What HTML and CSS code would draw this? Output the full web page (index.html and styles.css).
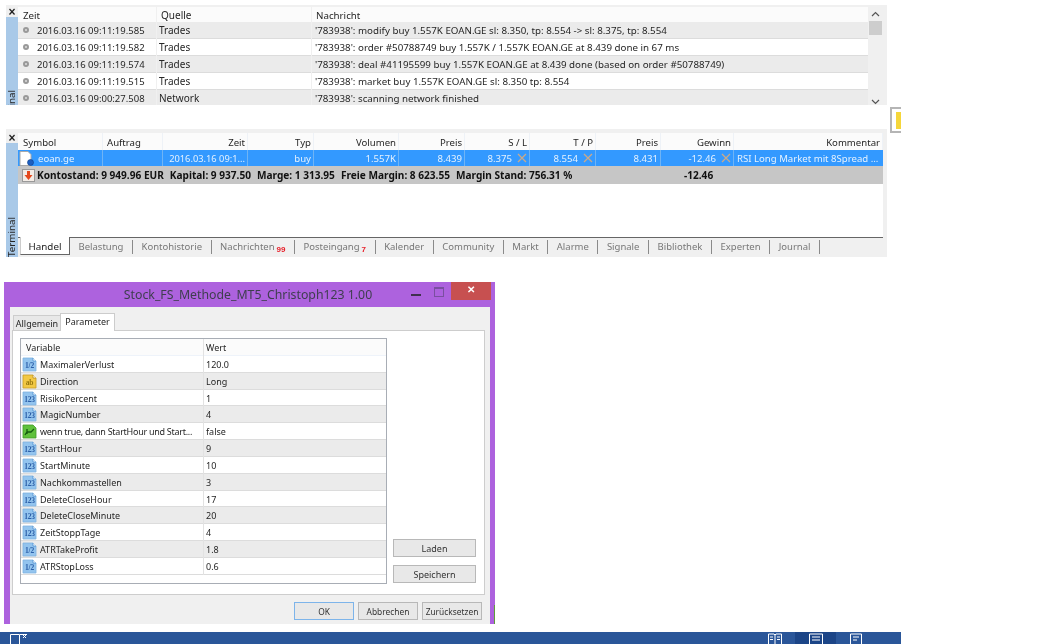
FILE: index.html
```html
<!DOCTYPE html>
<html lang="de">
<head>
<meta charset="utf-8">
<title>Terminal</title>
<link rel="stylesheet" href="styles.css">
</head>
<body>
<svg class="defs" width="0" height="0">
  <symbol id="doc" viewBox="0 0 15 15"><path d="M1 1h10l3 3v10H1z" fill="#93c4ee" stroke="#7fb2e0" stroke-width=".8"/><path d="M11 1v3h3" fill="#fff" stroke="#4d8fd0" stroke-width=".8"/></symbol>
  <symbol id="doc-y" viewBox="0 0 15 15"><path d="M1 1h10l3 3v10H1z" fill="#f2c844" stroke="#c89c24" stroke-width=".8"/><path d="M11 1v3h3" fill="#fff" stroke="#b88c20" stroke-width=".8"/></symbol>
  <symbol id="doc-g" viewBox="0 0 15 15"><path d="M1 1h10l3 3v10H1z" fill="#5fc13c" stroke="#3f9a26" stroke-width=".8"/><path d="M3 11l2-3h4l3-3M5 5v5" fill="none" stroke="#145c10" stroke-width="1.300"/></symbol>
  <symbol id="x" viewBox="0 0 10 10"><path d="M1 1l8 8M9 1l-8 8" fill="none" stroke="#c9a98a" stroke-width="1.300"/></symbol>
</svg>

<section class="panel log-panel">
  <div class="strip">
    <span class="close">×</span>
    <div class="side"><span class="side-label">Terminal</span></div>
  </div>
  <div class="list">
    <div class="row log head"><span>Zeit</span><span>Quelle</span><span>Nachricht</span></div>
    <div class="row log alt"><span class="time"><i class="dot"></i>2016.03.16 09:11:19.585</span><span>Trades</span><span>'783938': modify buy 1.557K EOAN.GE sl: 8.350, tp: 8.554 -&gt; sl: 8.375, tp: 8.554</span></div>
    <div class="row log"><span class="time"><i class="dot"></i>2016.03.16 09:11:19.582</span><span>Trades</span><span>'783938': order #50788749 buy 1.557K / 1.557K EOAN.GE at 8.439 done in 67 ms</span></div>
    <div class="row log alt"><span class="time"><i class="dot"></i>2016.03.16 09:11:19.574</span><span>Trades</span><span>'783938': deal #41195599 buy 1.557K EOAN.GE at 8.439 done (based on order #50788749)</span></div>
    <div class="row log"><span class="time"><i class="dot"></i>2016.03.16 09:11:19.515</span><span>Trades</span><span>'783938': market buy 1.557K EOAN.GE sl: 8.350 tp: 8.554</span></div>
    <div class="row log alt"><span class="time"><i class="dot"></i>2016.03.16 09:00:27.508</span><span>Network</span><span>'783938': scanning network finished</span></div>
  </div>
  <div class="scrollbar">
    <svg width="15" height="14" viewBox="0 0 15 14"><path d="M4 9l3.500-3.500L11 9" fill="none" stroke="#555" stroke-width="1.200"/></svg>
    <div class="thumb"></div>
    <svg class="down" width="15" height="10" viewBox="0 0 15 10"><path d="M4 3l3.500 3.500L11 3" fill="none" stroke="#555" stroke-width="1.200"/></svg>
  </div>
</section>

<div class="side-tip"><div class="tip-icon"></div></div>

<section class="panel trade-panel">
  <div class="strip">
    <span class="close">×</span>
    <div class="side"><span class="side-label bottom">Terminal</span></div>
  </div>
  <div class="trade-main">
    <div class="row trade head">
      <span>Symbol</span><span>Auftrag</span><span class="r">Zeit</span><span class="r">Typ</span><span class="r">Volumen</span><span class="r">Preis</span><span class="r">S / L</span><span class="r">T / P</span><span class="r">Preis</span><span class="r">Gewinn</span><span class="r">Kommentar</span>
    </div>
    <div class="row trade sel">
      <span class="sym"><svg width="16" height="16" viewBox="0 0 16 16"><path d="M1 .5h8l3 3v11H1z" fill="#fff" stroke="#aaa"/><circle cx="11.500" cy="11.500" r="3" fill="#1d5fc0" stroke="#0c3c8a" stroke-width=".6"/></svg>eoan.ge</span>
      <span></span>
      <span class="r dt">2016.03.16 09:1...</span><span class="r">buy</span><span class="r">1.557K</span><span class="r">8.439</span>
      <span class="r x">8.375<svg class="cross"><use href="#x"/></svg></span><span class="r x">8.554<svg class="cross"><use href="#x"/></svg></span>
      <span class="r">8.431</span><span class="r x">-12.46<svg class="cross"><use href="#x"/></svg></span><span class="cmt">RSI Long Market mit 8Spread ...</span>
    </div>
    <div class="summary">
      <svg width="13" height="13" viewBox="0 0 13 13"><rect x=".5" y=".5" width="12" height="12" fill="#f3ece6" stroke="#999"/><path d="M5 2h3v4h2.500L6.500 11 2.500 6H5z" fill="#e4481c"/></svg>
      <strong class="acct">Kontostand: 9 949.96 EUR</strong><strong class="acct">Kapital: 9 937.50</strong><strong class="acct">Marge: 1 313.95</strong><strong class="acct">Freie Margin: 8 623.55</strong><strong class="acct">Margin Stand: 756.31 %</strong>
      <strong class="total">-12.46</strong>
    </div>
    <div class="spacer"></div>
    <nav class="tabs">
      <span class="tab active">Handel</span>
      <span class="tab">Belastung</span>
      <span class="tab">Kontohistorie</span>
      <span class="tab">Nachrichten<em>99</em></span>
      <span class="tab">Posteingang<em>7</em></span>
      <span class="tab">Kalender</span>
      <span class="tab">Community</span>
      <span class="tab">Markt</span>
      <span class="tab">Alarme</span>
      <span class="tab">Signale</span>
      <span class="tab">Bibliothek</span>
      <span class="tab">Experten</span>
      <span class="tab">Journal</span>
    </nav>
  </div>
</section>

<section class="dialog">
  <header class="titlebar">
    <span class="title">Stock_FS_Methode_MT5_Christoph123 1.00</span>
    <div class="controls">
      <span class="min"></span><span class="max"></span>
      <span class="shut">✕</span>
    </div>
  </header>
  <div class="client">
    <div class="dtabs"><span class="dtab">Allgemein</span><span class="dtab on">Parameter</span></div>
    <div class="page">
      <div class="ptable">
        <div class="prow phead"><span>Variable</span><span>Wert</span></div>
        <div class="prow"><span class="pname"><svg class="ic"><use href="#doc"/></svg><b class="gl">1/2</b>MaximalerVerlust</span><span>120.0</span></div>
        <div class="prow alt"><span class="pname"><svg class="ic"><use href="#doc-y"/></svg><b class="gl y">ab</b>Direction</span><span>Long</span></div>
        <div class="prow"><span class="pname"><svg class="ic"><use href="#doc"/></svg><b class="gl">123</b>RisikoPercent</span><span>1</span></div>
        <div class="prow alt"><span class="pname"><svg class="ic"><use href="#doc"/></svg><b class="gl">123</b>MagicNumber</span><span>4</span></div>
        <div class="prow"><span class="pname tight"><svg class="ic"><use href="#doc-g"/></svg>wenn true, dann StartHour und Start...</span><span>false</span></div>
        <div class="prow alt"><span class="pname"><svg class="ic"><use href="#doc"/></svg><b class="gl">123</b>StartHour</span><span>9</span></div>
        <div class="prow"><span class="pname"><svg class="ic"><use href="#doc"/></svg><b class="gl">123</b>StartMinute</span><span>10</span></div>
        <div class="prow alt"><span class="pname"><svg class="ic"><use href="#doc"/></svg><b class="gl">123</b>Nachkommastellen</span><span>3</span></div>
        <div class="prow"><span class="pname"><svg class="ic"><use href="#doc"/></svg><b class="gl">123</b>DeleteCloseHour</span><span>17</span></div>
        <div class="prow alt"><span class="pname"><svg class="ic"><use href="#doc"/></svg><b class="gl">123</b>DeleteCloseMinute</span><span>20</span></div>
        <div class="prow"><span class="pname"><svg class="ic"><use href="#doc"/></svg><b class="gl">123</b>ZeitStoppTage</span><span>4</span></div>
        <div class="prow alt"><span class="pname"><svg class="ic"><use href="#doc"/></svg><b class="gl">1/2</b>ATRTakeProfit</span><span>1.8</span></div>
        <div class="prow"><span class="pname"><svg class="ic"><use href="#doc"/></svg><b class="gl">1/2</b>ATRStopLoss</span><span>0.6</span></div>
      </div>
      <div class="side-btns">
        <button class="btn wide">Laden</button>
        <button class="btn wide">Speichern</button>
      </div>
    </div>
    <footer class="actions">
      <button class="btn act ok">OK</button>
      <button class="btn act">Abbrechen</button>
      <button class="btn act">Zurücksetzen</button>
    </footer>
  </div>
</section>

<footer class="taskbar">
  <svg class="start" width="18" height="12" viewBox="0 0 18 12"><path d="M.5 12V1.500h9V12M10 1.500h7M13 2l3 3m0-3l-3 3" fill="none" stroke="#fff"/></svg>
  <div class="views">
    <span class="view"><svg width="14" height="12" viewBox="0 0 14 12"><path d="M.5 12V1h5.500l1 1 1-1h5.500v11M7 2v10M2 4h3M2 6.500h3M9 4h3M9 6.500h3" fill="none" stroke="#fff"/></svg></span>
    <span class="view current"><svg width="14" height="12" viewBox="0 0 14 12"><path d="M.5 12V1h13v11M3 4h8M3 7h8" fill="none" stroke="#fff"/></svg></span>
    <span class="view"><svg width="14" height="12" viewBox="0 0 14 12"><path d="M.5 12V1h11v11M3 4h6M3 7h4" fill="none" stroke="#fff"/></svg></span>
  </div>
</footer>
</body>
</html>
```

FILE: styles.css
```css
* { box-sizing: border-box; }
html, body { margin: 0; height: 100%; }
body {
  position: relative;
  width: 1055px;
  height: 644px;
  overflow: hidden;
  background: #fff;
  font-family: "Noto Sans", "Liberation Sans", sans-serif;
  font-size: 9.600px;
  color: #262626;
}
.defs { position: absolute; }

.panel { position: absolute; left: 6px; width: 881px; display: flex; overflow: hidden; background: #f0f0f0; filter: blur(.25px); }
.log-panel { top: 5px; height: 100px; padding-top: 2px; }
.trade-panel { top: 129px; height: 128px; padding-top: 4px; }

.strip { width: 12px; flex: none; display: flex; flex-direction: column; }
.close { height: 10px; text-align: center; font: bold 12px/10px "Liberation Sans", sans-serif; color: #222; }
.side { flex: 1; background: #a9c9e8; overflow: hidden; padding-top: 75px; }
.trade-panel .side { padding-top: 76px; }
.side-label { display: block; writing-mode: vertical-rl; transform: rotate(180deg); font-size: 9.800px; line-height: 12px; height: 38px; }

.list { width: 850px; flex: none; background: #fff; }
.row { display: grid; height: 17px; align-items: center; }
.log { grid-template-columns: 138px 155px 1fr; background: #fff; border-bottom: 1px solid #dcdcdc; font-size: 9.750px; }
.log.alt { background: #ebebeb; }
.log.head { height: 15px; background: #fbfbfb; border-bottom: 0; }
.log > span { padding-left: 3px; white-space: nowrap; border-left: 1px solid #f0f0f0; height: 100%; line-height: 18px; }
.log > span:first-child { border-left: 0; }
.log > span:nth-child(2) { padding-left: 2px; font-size: 10px; line-height: 17px; }
.log.head > span { padding-left: 4px; line-height: 17px; }
.log.head > span:first-child { padding-left: 5px; }
.time { position: relative; padding-left: 19px !important; font-size: 9.500px; }
.dot { position: absolute; left: 5px; top: 5px; width: 6px; height: 6px; border: 2px solid #999; border-radius: 50%; background: #ddd; }

.scrollbar { width: 15px; flex: none; background: #f0f0f0; position: relative; }
.scrollbar svg { display: block; }
.thumb { height: 14px; margin: 0 1px; background: #cdcdcd; }
.down { position: absolute; bottom: -2px; left: 0; }

.trade-main { flex: 1; display: flex; flex-direction: column; min-width: 0; margin-right: 4px; }
.trade { grid-template-columns: 85px 60px 85px 66px 85px 66px 65px 66px 65px 73px 149px; background: #fff; }
.trade > span { padding: 0 2px 0 4px; white-space: nowrap; height: 100%; line-height: 17px; border-right: 1px solid #eef2f7; }
.trade.head { background: #fbfbfb; height: 17px; }
.trade.head > span { line-height: 19px; }
.trade.head > span:first-child { padding-left: 5px; }
.trade.sel { background: #3399ff; color: #e4f1ff; height: 16px; }
.trade.sel > span { border-right: 1px solid #6fb4f5; }
.r { text-align: right; }
.dt { font-size: 9.300px; }
.x { padding-right: 17px !important; position: relative; }
.cross { position: absolute; right: 2px; top: 3px; width: 10px; height: 10px; }
.sym { display: flex; align-items: center; gap: 3px; padding-left: 1px !important; }
.cmt { padding-left: 3px !important; overflow: hidden; border-right: 0 !important; }

.summary { height: 18px; background: #c6c6c6; display: flex; align-items: center; color: #111; padding-left: 4px; position: relative; font-size: 10.100px; }
.summary svg { margin-right: 2px; flex: none; }
.acct { margin-right: 6px; white-space: nowrap; }
.total { position: absolute; left: 666px; }
.spacer { flex: 1; background: #fff; }

.tabs { height: 20px; display: flex; border-top: 1px solid #666; background: #f0f0f0; padding-left: 2px; color: #777; font-size: 9.500px; }
.tab { padding: 0 8.550px; border-right: 1px solid #8a8a8a; margin-top: 2px; height: 14px; line-height: 14px; white-space: nowrap; }
.tab.active { margin-top: -1px; height: 18px; width: 50px; padding: 1px 0 0; text-align: center; background: #fff; color: #222; border: 1px solid #666; border-top: 0; border-left-color: #ccc; line-height: 17px; font-size: 9.800px; }
.tab em { font: bold 8px/1 "Liberation Sans", sans-serif; color: #e8202a; margin-left: 2px; vertical-align: -2px; }

.dialog { position: absolute; left: 4px; top: 282px; width: 491px; height: 342px; background: #ad62de; padding: 0 5px 0 6px; display: flex; flex-direction: column; font-size: 9px; filter: blur(.25px); }
.dialog::after { content: ""; position: absolute; right: 0; bottom: 0; width: 1px; height: 19px; background: #5f9e3a; }
.titlebar { height: 25px; position: relative; display: flex; justify-content: center; align-items: center; flex: none; }
.title { font-size: 12.300px; color: #3e3e4e; margin-right: 4px; }
.controls { position: absolute; right: -1px; top: 0; display: flex; align-items: flex-start; }
.min { width: 10px; height: 2px; background: #40304e; margin: 12px 13px 0 0; }
.max { width: 10px; height: 10px; border: 1px solid #7a4fa0; border-top-width: 2px; margin: 5px 7px 0 0; }
.shut { width: 40px; height: 18px; background: #c75050; color: #fff; text-align: center; font: bold 10px/16px "Liberation Sans", sans-serif; }

.client { flex: 1; background: #f0f0f0; display: flex; flex-direction: column; padding: 0 5px 0 2px; min-height: 0; position: relative; }
.client::after { content: ""; position: absolute; right: 1px; bottom: 0; width: 6px; height: 6px; background: radial-gradient(circle, #b5b5b5 40%, transparent 45%) 0 0 / 2px 2px; }
.dtabs { height: 23px; display: flex; align-items: flex-end; padding-left: 1px; flex: none; }
.dtab { height: 15px; width: 48px; border: 1px solid #cdcdcd; border-bottom: 0; background: #e8e8e8; text-align: center; line-height: 15px; }
.dtab.on { width: 55px; height: 18px; background: #fff; margin-left: -1px; margin-bottom: -1px; position: relative; line-height: 15px; z-index: 1; border-color: #ccc; }

.page { height: 265px; flex: none; background: #fff; border: 1px solid #cdcdcd; padding: 7px 8px 7px 7px; display: flex; }
.ptable { width: 367px; height: 246px; border: 1px solid #a8adb5; flex: none; background: #fff; }
.prow { display: grid; grid-template-columns: 182px 1fr; height: 16.830px; align-items: center; border-bottom: 1px solid #dcdcdc; }
.prow.alt { background: #ebebeb; }
.prow > span { height: 100%; line-height: 17px; padding-left: 2px; white-space: nowrap; }
.prow > span:last-child { border-left: 1px solid #e2e2e2; }
.prow.phead { background: #fbfbfb; height: 17px; border-bottom: 1px solid #eef3fa; }
.phead > span { line-height: 18px; }
.phead > span:first-child { padding-left: 5px; }
.pname { position: relative; padding-left: 19px !important; }
.tight { letter-spacing: -.27px; }
.ic { position: absolute; left: 1px; top: 1px; width: 15px; height: 15px; }
.gl { position: absolute; left: 1px; top: 5px; width: 15px; text-align: center; font: bold 7.500px/9px "Liberation Serif", serif; color: #2b5fa8; letter-spacing: -.2px; }
.gl.y { color: #9a7a10; }

.side-btns { display: flex; flex-direction: column; gap: 8px; margin: auto 0 4px 6px; }
.btn { font: inherit; color: #333; background: #e8e8e8; border: 1px solid #b8b8b8; padding: 0; }
.wide { width: 83px; height: 18px; }

.actions { flex: 1; display: flex; gap: 4px; justify-content: flex-end; align-items: flex-start; padding: 7px 3px 0 0; }
.act { width: 60px; height: 18px; font-size: 8.400px; }
.ok { border-color: #7db4ea; }

.side-tip { position: absolute; left: 890px; top: 107px; width: 11px; height: 26px; border: 2px solid #b5b5b5; border-right: 0; background: #fff; padding: 3px 0 0 4px; }
.tip-icon { width: 5px; height: 17px; background: #f5d63a; }

.taskbar { position: absolute; left: 0; top: 632px; width: 901px; height: 12px; background: #2a5699; display: flex; justify-content: space-between; overflow: hidden; }
.start { margin: 1px 0 0 10px; }
.views { display: flex; margin-right: 24px; }
.view { width: 41px; height: 12px; padding-top: 1px; }
.view svg { display: block; margin: 0 auto; }
.view.current { background: #1c4587; }
```
